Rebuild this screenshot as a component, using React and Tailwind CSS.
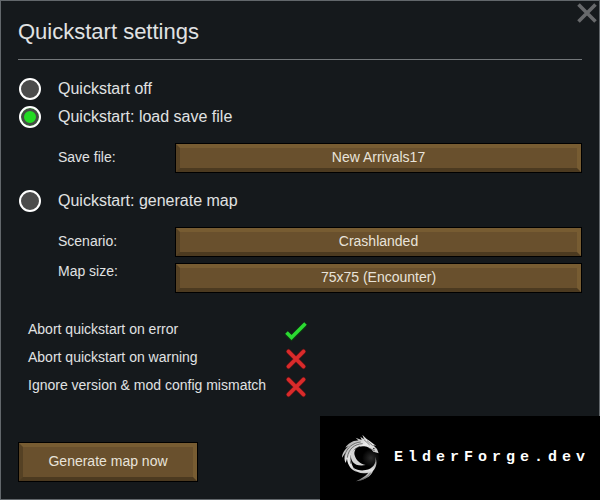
import { useState } from 'react';

const modes = {
    off: 'Quickstart off',
    load: 'Quickstart: load save file',
    generate: 'Quickstart: generate map',
};

const options = [
    { id: 'error', label: 'Abort quickstart on error' },
    { id: 'warning', label: 'Abort quickstart on warning' },
    { id: 'mismatch', label: 'Ignore version & mod config mismatch' },
];

const BevelButton = ({ id, tall, children }) => (
    <button id={id} type="button" className="flex w-full border border-black text-sm text-[#e8e3da]">
        <span
            className={`flex-1 border-4 border-t-[#775c32] border-r-[#775c32] border-b-[#4c3a20] border-l-[#554124] bg-[#69502d] pb-0.5 ${tall ? 'leading-7' : 'leading-[18px]'}`}
        >
            {children}
        </span>
    </button>
);

const ModeRadio = ({ value, mode, onChange }) => (
    <label className="flex h-7 items-center gap-[17px] text-base">
        <input
            type="radio"
            name="mode"
            value={value}
            checked={mode === value}
            onChange={() => onChange(value)}
            className="ml-px size-[22px] appearance-none rounded-full border-2 border-white bg-[#4c4c4c] checked:bg-[#22dc22] checked:inset-shadow-[0_0_0_3px_#454b45]"
        />
        {modes[value]}
    </label>
);

const Tick = () => (
    <svg viewBox="0 0 24 24" className="size-6" fill="none" aria-hidden="true">
        <path d="M2.5 14 L7.5 19 L21 5.5" stroke="#0c3a10" strokeWidth="5" />
        <path d="M2.5 13.5 L7.5 18.5 L21.5 4.5" stroke="#2bd932" strokeWidth="3.6" />
    </svg>
);

const Cross = () => (
    <svg viewBox="0 0 24 24" className="size-6" fill="none" strokeLinecap="round" aria-hidden="true">
        <path d="M4.5 4.5 L19.5 19.5 M19.5 4.5 L4.5 19.5" stroke="#5d1517" strokeWidth="5" />
        <path d="M4.5 4.5 L19.5 19.5 M19.5 4.5 L4.5 19.5" stroke="#d92b2b" strokeWidth="3.8" />
    </svg>
);

const DragonLogo = () => (
    <svg viewBox="85 65 120 150" className="h-[50px] w-10 shrink-0" aria-hidden="true">
        <defs>
            <linearGradient id="silver" x1="0" y1="0" x2="1" y2="1">
                <stop offset="0" stopColor="#7d7d7d" />
                <stop offset="0.45" stopColor="#eeeeee" />
                <stop offset="1" stopColor="#a5a5a5" />
            </linearGradient>
            <linearGradient id="tail" x1="0" y1="0" x2="0" y2="1">
                <stop offset="0" stopColor="#6b6b6b" />
                <stop offset="0.55" stopColor="#e6e6e6" />
                <stop offset="1" stopColor="#777777" />
            </linearGradient>
            <radialGradient id="glow">
                <stop offset="0" stopColor="#2c2c2c" />
                <stop offset="1" stopColor="#000000" />
            </radialGradient>
        </defs>
        <circle cx="178" cy="140" r="27" fill="url(#glow)" />
        <path d="M201 126 L196 113 L184 101 L194 104 L174 89 L165 83 L152 70 L157 84 L146 76 L150 86 L132 79 L141 88 C126 86 108 97 101 109 L112 104 C98 114 91 128 91 139 L101 124 C97 137 98 148 102 155 L106 142 C108 163 120 177 137 182 C120 168 115 149 119 132 C124 113 140 103 158 105 C169 106 178 112 185 121 Z" fill="url(#silver)" />
        <path d="M107 139 C110 113 129 98 153 97 M99 133 C105 109 124 94 147 92 M117 157 C112 132 126 112 145 105" stroke="#3d3d3d" strokeWidth="2" fill="none" />
        <path d="M157 85 L174 101 M166 88 L183 103 M171 110 L190 119" stroke="#4a4a4a" strokeWidth="2" />
        <path d="M184 109 L191 113 L185 114 Z" fill="#111111" />
        <path d="M118 127 C115 151 130 167 162 161 C145 158 133 147 129 132 C127 127 128 120 132 114 C125 116 120 121 118 127 Z" fill="#d4d4d4" />
        <path d="M190 136 C196 156 183 172 162 176 C148 179 136 176 125 169 C134 184 150 189 170 184 C160 196 148 202 133 210 C158 206 178 196 184 179 C195 167 198 151 190 136 Z" fill="url(#tail)" />
        <path d="M177 184 C169 197 156 204 145 207" stroke="#555555" strokeWidth="2" fill="none" />
    </svg>
);

export default function App() {
    const [mode, setMode] = useState('load');
    const [checks, setChecks] = useState({ error: true, warning: false, mismatch: false });

    return (
        <main className="relative flex min-h-screen flex-col border border-[#62676b] bg-[#15191c] px-[17px] pb-[17px] font-['Liberation_Sans',Arial,sans-serif] text-sm text-[#e0e2e3]">
            <button type="button" aria-label="Close" className="absolute top-0.5 right-0.5 text-[#67696b]">
                <svg viewBox="0 0 20 20" className="size-5" stroke="currentColor" strokeWidth="3.6" aria-hidden="true">
                    <path d="M1.5 1.5 L18.5 18.5 M18.5 1.5 L1.5 18.5" />
                </svg>
            </button>

            <h1 className="mb-[15px] border-b border-[#73777a] pt-4 pb-3 text-[22px] leading-[30px]">Quickstart settings</h1>

            <ModeRadio value="off" mode={mode} onChange={setMode} />
            <ModeRadio value="load" mode={mode} onChange={setMode} />
            <div className="mt-3 mb-3.5 flex pl-10">
                <label htmlFor="save" className="w-[117px] leading-7">Save file:</label>
                <div className="flex-1">
                    <BevelButton id="save">New Arrivals17</BevelButton>
                </div>
            </div>

            <ModeRadio value="generate" mode={mode} onChange={setMode} />
            <div className="mt-3 flex pl-10">
                <div className="flex w-[117px] flex-col gap-0.5 leading-7">
                    <label htmlFor="scenario">Scenario:</label>
                    <label htmlFor="size">Map size:</label>
                </div>
                <div className="flex flex-1 flex-col gap-1.5">
                    <BevelButton id="scenario">Crashlanded</BevelButton>
                    <BevelButton id="size">75x75 (Encounter)</BevelButton>
                </div>
            </div>

            <div className="mt-6 flex max-w-[290px] flex-col pl-2.5">
                {options.map(({ id, label }) => (
                    <label key={id} className="flex h-7 items-start justify-between leading-6">
                        {label}
                        <input
                            type="checkbox"
                            checked={checks[id]}
                            onChange={() => setChecks({ ...checks, [id]: !checks[id] })}
                            className="sr-only"
                        />
                        <span className="pt-0.5">{checks[id] ? <Tick /> : <Cross />}</span>
                    </label>
                ))}
            </div>

            <div className="mt-auto w-[180px]">
                <BevelButton tall>Generate map now</BevelButton>
            </div>

            <a
                href="#elderforge"
                className="absolute -right-px -bottom-px flex h-[84px] w-[280px] items-center gap-3.5 bg-black pl-5 font-['Liberation_Mono',monospace] text-[15px] font-bold text-white"
            >
                <DragonLogo />
                <span className="tracking-[5px]">ElderForge.dev</span>
            </a>
        </main>
    );
}
